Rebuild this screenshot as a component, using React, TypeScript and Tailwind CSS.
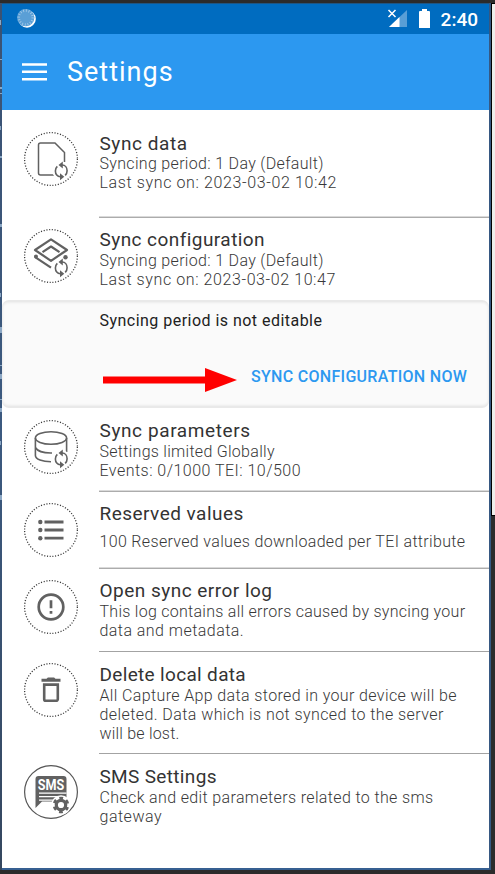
import React from "react";

type Line = { text: string; track: string };

function Sync() {
  return (
    <g>
      <circle cx="37.2" cy="38.8" r="9" fill="#fff" />
      <path d="M37 33h1.200c2.900 0 4.900 2.600 4.900 5.800 0 1.900-.7 3.400-1.900 4.600M37.500 44.800h-1.200c-2.900 0-4.900-2.600-4.900-5.800 0-1.900.7-3.400 1.900-4.600" fill="none" stroke="#616161" strokeWidth="1.600" />
      <path d="M38.800 29.500v7l-4.300-3.500zM36 41.300v7l4.300-3.500z" fill="#616161" />
    </g>
  );
}

function Ring({ solid, children }: { solid?: boolean; children: React.ReactNode }) {
  return (
    <svg className="block h-[54px] w-[54px] shrink-0" viewBox="0 0 54 54">
      <circle cx="27" cy="27" r="26.400" fill="none" stroke={solid ? "#555" : "#3c3c3c"} strokeWidth={solid ? 1.2 : 1.3} strokeDasharray={solid ? undefined : "1.1 1.665"} />
      {children}
    </svg>
  );
}

const DataIcon = (
  <Ring>
    <path d="M30 43H16.500a2 2 0 0 1-2-2V13a2 2 0 0 1 2-2H31l9.500 9.500V30" fill="none" stroke="#616161" strokeWidth="1.500" />
    <Sync />
  </Ring>
);
const ConfigIcon = (
  <Ring>
    <g fill="none" stroke="#616161" strokeWidth="2.200" strokeLinejoin="round">
      <path d="M27 10.300 43 21 27 31.800 11 21z" />
      <path d="m18.500 23.200 8.500-5.700 8.500 5.700" />
      <path d="M11.500 26.500v1.800l15.500 10.400" />
    </g>
    <circle cx="12" cy="27.500" r="2" fill="#616161" />
    <Sync />
    <circle cx="41.500" cy="28.200" r="2.200" fill="#616161" />
  </Ring>
);
const DatabaseIcon = (
  <Ring>
    <g fill="none" stroke="#616161" strokeWidth="1.600">
      <ellipse cx="27" cy="18" rx="15.600" ry="6.300" />
      <path d="M11.400 18v17.500c0 3.800 7 6.300 15.600 6.300M11.400 27.500c2 3.500 8 5.700 16.600 5.500M42.600 18v14" />
    </g>
    <Sync />
  </Ring>
);
const ListIcon = (
  <Ring>
    <path d="M20.500 19h19M20.500 27h19M20.500 35.200h19" stroke="#616161" strokeWidth="2.800" />
    <circle cx="16.300" cy="19" r="2.200" fill="#616161" />
    <circle cx="16.300" cy="27" r="2.200" fill="#616161" />
    <circle cx="16.300" cy="35.200" r="2.200" fill="#616161" />
  </Ring>
);
const ErrorIcon = (
  <Ring>
    <circle cx="27" cy="27" r="12.300" fill="none" stroke="#616161" strokeWidth="2.700" />
    <path d="M27 20.300v8M27 31v2.700" stroke="#616161" strokeWidth="2.700" />
  </Ring>
);
const DeleteIcon = (
  <Ring>
    <path d="M17.500 15.800h5l1.400-1.400h6.200l1.400 1.400h5v3h-19z" fill="#616161" />
    <path d="M20.200 21.600h13.600v14.600a1.600 1.600 0 0 1-1.600 1.600H21.800a1.600 1.600 0 0 1-1.600-1.600z" fill="none" stroke="#616161" strokeWidth="2.600" />
  </Ring>
);
const SmsIcon = (
  <Ring solid>
    <path d="M14.500 11h25a3 3 0 0 1 3 3v22.500H18L11.500 43V14a3 3 0 0 1 3-3z" fill="#616161" />
    <path d="M15 28.200h27.500M15 31.700h24M15 35.200h20" stroke="#fff" strokeWidth="1.200" />
    <text x="27" y="25.200" textAnchor="middle" textLength="26.500" lengthAdjust="spacingAndGlyphs" fill="#fff" fontSize="15.500" fontWeight="700" className="font-[Roboto,sans-serif]">SMS</text>
    <circle cx="37" cy="40" r="9.800" fill="#fff" />
    <circle cx="37" cy="40" r="4.700" fill="none" stroke="#616161" strokeWidth="3.200" />
    <circle cx="37" cy="40" r="6.800" fill="none" stroke="#616161" strokeWidth="3" strokeDasharray="3.560 3.560" strokeDashoffset="1.780" transform="rotate(30 37 40)" />
  </Ring>
);

function Row({ icon, title, lines, className, gap, low }: { icon: React.ReactNode; title: Line; lines: Line[]; className: string; gap?: boolean; low?: boolean }) {
  return (
    <section className={"flex shrink-0 pl-[22px] " + className}>
      {icon}
      <div className={"ml-[21.5px] flex-1 self-stretch whitespace-nowrap " + (low ? "pt-px" : "")}>
        <h2 className={"text-[19px] leading-[22px] font-normal text-[#333] " + title.track}>{title.text}</h2>
        <div className={gap ? "mt-[7px]" : ""}>
          {lines.map((l) => (
            <p key={l.text} className={"text-[16px] leading-[19px] font-light text-[#383838] " + l.track}>{l.text}</p>
          ))}
        </div>
      </div>
    </section>
  );
}

const Rule = () => <div className="ml-[97px] h-[1px] shrink-0 bg-[#a3a3a3]" />;
const SoftRule = () => <div className="ml-[97px] h-[2px] shrink-0 border-t border-[#dadada] bg-[#acacac]" />;

export default function App() {
  return (
    <div className="flex h-[874px] w-[495px] flex-col overflow-hidden bg-[#2b2b2b] pt-[3px] font-[Roboto,'Liberation_Sans',sans-serif]">
      <div className="flex h-[867px]">
        <svg className="block h-[867px] w-[2px] bg-gradient-to-b from-[#3b5272] via-[#3c5a80] to-[#35475f]" viewBox="0 0 2 867">
          <path d="M0 17h1v5H0zM0 56h2v1H0zM0 84h2v2H0zM0 90h2v1H0zM0 123h1v4H0zM0 153h2v2H0zM0 221h2v3H0zM0 290h1v4H0zM0 324h2v6H0zM0 362h2v1H0zM0 371h2v5H0zM0 396h2v1H0zM0 405h2v4H0zM0 438h1v4H0zM0 492h2v5H0z" fill="#8ba7c4" />
        </svg>
        <main className="flex w-[487px] flex-col border-b-2 border-[#365f91] bg-white">
          <header className="shrink-0 bg-[#2c98f0]">
            <div className="flex h-[31px] items-center border-t border-[#1f5582] bg-[#006cc0] pr-[11px] pl-[14px] text-white">
              <svg width="20" height="20" viewBox="0 0 20 20">
                <circle cx="11" cy="9.900" r="8.800" fill="#fff" />
                <circle cx="9.700" cy="8.600" r="8.700" fill="#5a9fd6" />
                <circle cx="9.700" cy="8.600" r="7" fill="none" stroke="#a5cbe9" strokeWidth="2.500" strokeDasharray=".8 1.950" />
              </svg>
              <svg className="ml-auto" width="20" height="20" viewBox="0 0 20 20">
                <path d="M20 1v17H2z" fill="#589ed6" />
                <path d="M12.500 8v10H2z" fill="#fff" />
                <path d="m1.500 1 7 7m0-7-7 7" stroke="#fff" strokeWidth="1.500" />
              </svg>
              <svg className="-mt-px ml-[12px]" width="11" height="20" viewBox="0 0 11 20">
                <path d="M3 0h5v2h2a1 1 0 0 1 1 1v16H0V3a1 1 0 0 1 1-1h2z" fill="#fff" />
              </svg>
              <span className="ml-[11px] text-[19px] leading-[31px] font-medium">2:40</span>
            </div>
            <div className="flex h-[76px] items-center pl-[20px]">
              <svg width="25" height="18" viewBox="0 0 25 18">
                <path d="M0 1.500h25M0 8.800h25M0 16.200h25" stroke="#fff" strokeWidth="2.600" />
              </svg>
              <h1 className="ml-[20px] text-[27px] leading-[32px] tracking-[1px] text-white">Settings</h1>
            </div>
          </header>

          <Row className="h-[106px] pt-[22px]" icon={DataIcon} title={{ text: "Sync data", track: "tracking-[0.58px] relative top-px" }} lines={[{ text: "Syncing period: 1 Day (Default)", track: "tracking-[0.32px]" }, { text: "Last sync on: 2023-03-02 10:42", track: "tracking-[0.62px]" }]} />
          <SoftRule />
          <Row className="h-[82px] pt-[11px]" icon={ConfigIcon} title={{ text: "Sync configuration", track: "tracking-[0.44px]" }} lines={[{ text: "Syncing period: 1 Day (Default)", track: "tracking-[0.32px]" }, { text: "Last sync on: 2023-03-02 10:47", track: "tracking-[0.59px]" }]} />

          <section className="flex h-[108px] shrink-0 flex-col rounded-[7px] border-y-2 border-[#e9e9e9] bg-[#fafafa] pl-[97.5px] whitespace-nowrap shadow-[inset_0_0_3px_#ddd]">
            <p className="mt-[9px] text-[16px] leading-[19px] tracking-[0.47px] text-[#212121]">Syncing period is not editable</p>
            <div className="mt-[34px] flex h-[28px] items-center">
              <svg className="mt-[4px] ml-[3.5px]" width="134" height="24" viewBox="0 0 134 24">
                <path d="M0 8.500h102V0l32 12-32 12v-8.500H0z" fill="#f00" />
              </svg>
              <button className="-mt-[2px] ml-[14px] text-[16px] font-medium tracking-[0.3px] text-[#2c98f0]">SYNC CONFIGURATION NOW</button>
            </div>
          </section>

          <Row className="h-[82px] pt-[12px]" icon={DatabaseIcon} title={{ text: "Sync parameters", track: "tracking-[0.6px]" }} lines={[{ text: "Settings limited Globally", track: "tracking-[0.28px]" }, { text: "Events: 0/1000 TEI: 10/500", track: "tracking-[0.47px]" }]} />
          <SoftRule />
          <Row className="h-[75px] pt-[11px]" gap icon={ListIcon} title={{ text: "Reserved values", track: "tracking-[0.47px]" }} lines={[{ text: "100 Reserved values downloaded per TEI attribute", track: "tracking-[0.33px]" }]} />
          <SoftRule />
          <Row className="h-[82px] pt-[11px]" icon={ErrorIcon} title={{ text: "Open sync error log", track: "tracking-[0.48px]" }} lines={[{ text: "This log contains all errors caused by syncing your", track: "tracking-[0.27px]" }, { text: "data and metadata.", track: "tracking-[0.45px]" }]} />
          <Rule />
          <Row className="h-[101px] pt-[11px]" low icon={DeleteIcon} title={{ text: "Delete local data", track: "tracking-[0.33px]" }} lines={[{ text: "All Capture App data stored in your device will be", track: "tracking-[0.37px]" }, { text: "deleted. Data which is not synced to the server", track: "tracking-[0.42px]" }, { text: "will be lost.", track: "tracking-[0.2px]" }]} />
          <Rule />
          <Row className="h-[114px] pt-[11px]" low icon={SmsIcon} title={{ text: "SMS Settings", track: "tracking-[0.34px]" }} lines={[{ text: "Check and edit parameters related to the sms", track: "tracking-[0.36px]" }, { text: "gateway", track: "tracking-[0.5px]" }]} />
        </main>
        <div className="w-[2px] bg-[#365882]" />
        <div className="h-[513px] w-[4px] border-y border-l border-black bg-[#eeeeec]" />
      </div>
    </div>
  );
}
